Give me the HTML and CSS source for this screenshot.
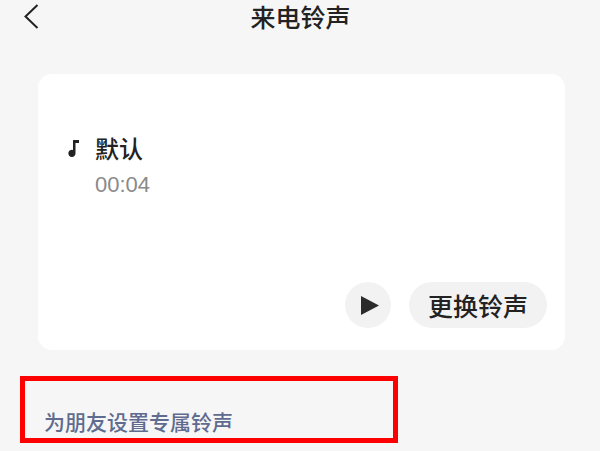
FILE: index.html
```html
<!DOCTYPE html>
<html lang="zh-CN">
<head>
    <meta charset="UTF-8">
    <title>来电铃声</title>
    <link rel="stylesheet" href="styles.css">
</head>
<body>
<header class="topbar">
    <svg class="back-icon" width="18" height="28" viewBox="0 0 18 28">
        <path d="M15.5 3 L3.5 14.5 L15.5 26" fill="none" stroke="#222" stroke-width="2"/>
    </svg>
    <h1>来电铃声</h1>
</header>

<section class="card">
    <div class="ring-name">
        <svg class="note-icon" width="12" height="20" viewBox="0 0 12 20">
            <path d="M6 2 H12 V5 H8.5 V15 A3.6 3.6 0 1 1 6 12 Z" fill="#222"/>
        </svg>
        <span>默认</span>
    </div>
    <p class="ring-time">00:04</p>
    <div class="actions">
        <button class="btn-play" type="button">
            <svg width="18" height="19" viewBox="0 0 18 19">
                <path d="M0 0 L18 9.5 L0 19 Z" fill="#2b2b2b"/>
            </svg>
        </button>
        <button class="btn-change" type="button">更换铃声</button>
    </div>
</section>

<p class="friends-title">为朋友设置专属铃声</p>

<!-- annotation drawn over the screenshot -->
<div class="mark-box"></div>
</body>
</html>
```

FILE: styles.css
```css
* {
    margin: 0;
    padding: 0;
    box-sizing: border-box;
}
body {
    position: relative;
    width: 600px;
    height: 451px;
    overflow: hidden;
    background: #f6f6f6;
    font-family: "Noto Sans CJK SC", "Liberation Sans", sans-serif;
    color: #222;
}
.topbar {
    position: relative;
    height: 32px;
    padding-left: 1px;
    display: flex;
    justify-content: center;
    align-items: center;
}
.topbar h1 {
    font-size: 25px;
    font-weight: 500;
    line-height: 32px;
}
.back-icon {
    position: absolute;
    left: 22px;
    top: 2px;
}
.card {
    width: 527px;
    height: 276px;
    margin: 42px 0 0 38px;
    padding: 59px 18px 0 29px;
    background: #fff;
    border-radius: 14px;
}
.ring-name {
    display: flex;
    align-items: center;
    gap: 16px;
    height: 30px;
    font-size: 24px;
    font-weight: 500;
    line-height: 30px;
}
.ring-time {
    margin: 10px 0 0 28px;
    font-family: "Liberation Sans", sans-serif;
    font-size: 22px;
    line-height: 24px;
    color: #8a8a8a;
}
.actions {
    display: flex;
    justify-content: flex-end;
    align-items: center;
    gap: 18px;
    margin-top: 85px;
}
.actions button {
    height: 46px;
    border: none;
    background: #f2f2f2;
    color: #222;
    font-family: inherit;
}
.btn-play {
    width: 46px;
    border-radius: 50%;
    display: flex;
    justify-content: center;
    align-items: center;
    padding-left: 4px;
}
.btn-change {
    width: 138px;
    border-radius: 23px;
    font-size: 25px;
    font-weight: 500;
    line-height: 46px;
}
.friends-title {
    margin: 57px 0 0 44px;
    font-size: 21px;
    font-weight: 500;
    line-height: 28px;
    color: #5f6b8f;
}
.mark-box {
    position: absolute;
    left: 20px;
    top: 376px;
    width: 378px;
    height: 67px;
    border: 5px solid #ff0000;
}
```
